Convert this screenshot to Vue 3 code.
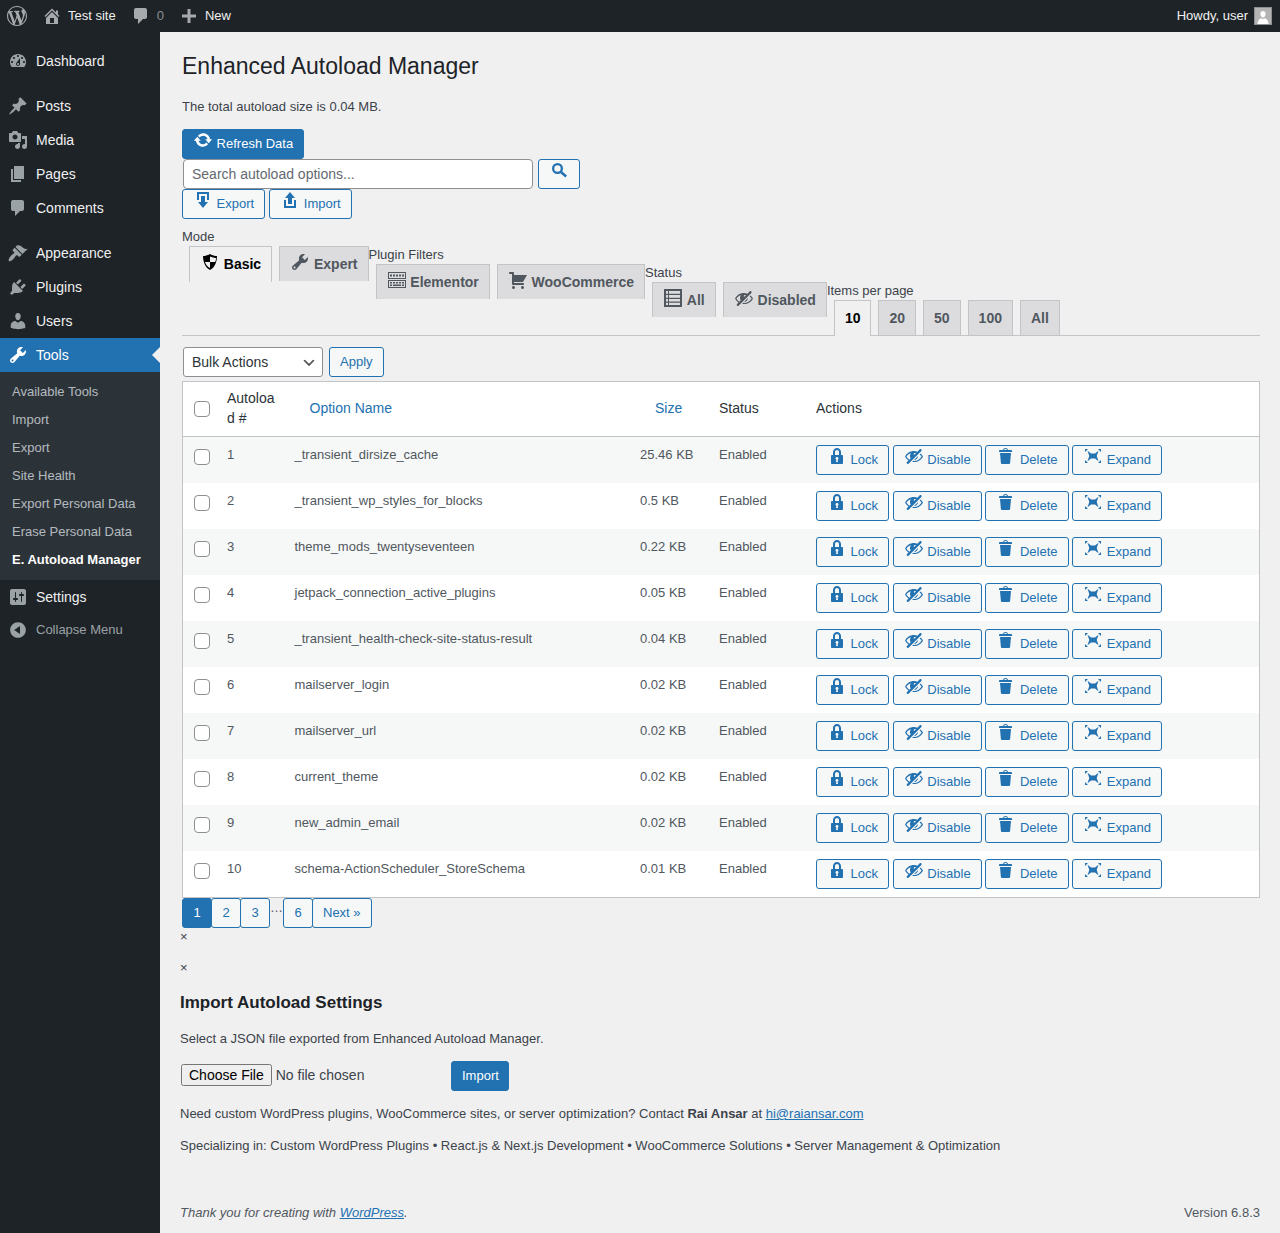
<template>
  <div class="admin">
    <header class="topbar">
      <svg class="dash wp-logo" viewBox="0 0 20 20"><path :d="icons.wordpress" /></svg>
      <span class="top-item"><svg class="dash" viewBox="0 0 20 20"><path :d="icons.home" /></svg>Test site</span>
      <span class="top-item comments"><svg class="dash" viewBox="0 0 20 20"><path :d="icons.comments" /></svg><em>0</em></span>
      <span class="top-item new"><svg class="dash" viewBox="0 0 20 20"><path :d="icons.plus" /></svg>New</span>
      <span class="howdy">Howdy, user
        <span class="avatar"><svg viewBox="0 0 16 16"><path d="M8 3c1.7 0 2.6 1.4 2.6 3S9.700 9.500 8 9.500 5.400 7.600 5.400 6 6.300 3 8 3zM2.500 16c0-3.500 2-5.500 3.500-5.800.6.500 1.300.8 2 .8s1.400-.3 2-.8c1.500.3 3.500 2.300 3.500 5.800z" /></svg></span>
      </span>
    </header>

    <div class="body">
      <nav class="sidebar">
        <template v-for="item in menu" :key="item.label">
          <div class="menu-item" :class="{ active: item.active, spaced: item.spaced }">
            <svg class="dash" viewBox="0 0 20 20"><path :d="icons[item.icon]" /></svg>
            {{ item.label }}
          </div>
          <ul v-if="item.active" class="submenu">
            <li v-for="sub in submenu" :key="sub" :class="{ current: sub === 'E. Autoload Manager' }">{{ sub }}</li>
          </ul>
        </template>
        <div class="collapse-row">
          <svg class="dash" viewBox="0 0 20 20"><path :d="icons.collapse" /></svg>
          Collapse Menu
        </div>
      </nav>

      <main class="content">
        <div class="wrap">
          <h1>Enhanced Autoload Manager</h1>
          <p class="total">The total autoload size is 0.04 MB.</p>

          <div class="toolbar">
            <button class="btn primary"><svg class="dash" viewBox="0 0 20 20"><path :d="icons.update" /></svg>Refresh Data</button>
          </div>
          <div class="toolbar search-row">
            <input class="search" type="text" placeholder="Search autoload options..." />
            <button class="btn icon-only"><svg class="dash" viewBox="0 0 20 20"><path :d="icons.search" /></svg></button>
          </div>
          <div class="toolbar io-row">
            <button class="btn"><svg class="dash" viewBox="0 0 20 20"><path :d="icons.download" /></svg>Export</button>
            <button class="btn"><svg class="dash" viewBox="0 0 20 20"><path :d="icons.upload" /></svg>Import</button>
          </div>

          <div class="tabs">
            <div v-for="(group, i) in tabGroups" :key="group.label" class="tab-group" :style="{ marginTop: i * 18 + 'px' }">
              <label>{{ group.label }}</label>
              <div class="tab-row">
                <a v-for="tab in group.tabs" :key="tab.text" class="tab" :class="{ on: tab.on }">
                  <svg v-if="tab.icon" class="dash" viewBox="0 0 20 20"><path :d="icons[tab.icon]" /></svg>{{ tab.text }}
                </a>
              </div>
            </div>
          </div>

          <div class="bulk">
            <select class="bulk-select"><option>Bulk Actions</option></select>
            <button class="btn">Apply</button>
          </div>

          <table class="options">
            <colgroup>
              <col style="width: 34px" />
              <col style="width: 67.5px" />
              <col style="width: 345.5px" />
              <col style="width: 79px" />
              <col style="width: 97px" />
              <col />
            </colgroup>
            <thead>
              <tr>
                <th class="check"><input type="checkbox" /></th>
                <th>Autoload #</th>
                <th><a class="sort">Option Name</a></th>
                <th><a class="sort">Size</a></th>
                <th>Status</th>
                <th>Actions</th>
              </tr>
            </thead>
            <tbody>
              <tr v-for="(row, i) in rows" :key="row[0]">
                <td class="check"><input type="checkbox" /></td>
                <td>{{ i + 1 }}</td>
                <td>{{ row[0] }}</td>
                <td>{{ row[1] }}</td>
                <td>Enabled</td>
                <td class="actions">
                  <button v-for="act in actions" :key="act.text" class="btn">
                    <svg class="dash" viewBox="0 0 20 20"><path :d="icons[act.icon]" /></svg>{{ act.text }}
                  </button>
                </td>
              </tr>
            </tbody>
          </table>

          <div class="pager">
            <a class="page current">1</a>
            <a class="page">2</a>
            <a class="page">3</a>
            <span class="dots">…</span>
            <a class="page">6</a>
            <a class="page next">Next »</a>
          </div>
        </div>

        <div class="modals">
          <div class="close first">×</div>
          <div class="close">×</div>
          <h2>Import Autoload Settings</h2>
          <p class="select-text">Select a JSON file exported from Enhanced Autoload Manager.</p>
          <div class="file-row">
            <input type="file" class="file" />
            <button class="btn primary plain">Import</button>
          </div>
          <p class="contact">Need custom WordPress plugins, WooCommerce sites, or server optimization? Contact <strong>Rai Ansar</strong> at <a href="#">hi@raiansar.com</a></p>
          <p class="special">Specializing in: Custom WordPress Plugins • React.js &amp; Next.js Development • WooCommerce Solutions • Server Management &amp; Optimization</p>
        </div>

        <footer class="foot">
          <span class="thanks">Thank you for creating with <a href="#">WordPress</a>.</span>
          <span>Version 6.8.3</span>
        </footer>
      </main>
    </div>
  </div>
</template>

<script setup>
const icons = {
  wordpress: 'M20 10c0-5.51-4.49-10-10-10C4.48 0 0 4.49 0 10c0 5.52 4.48 10 10 10 5.51 0 10-4.48 10-10zM7.780 15.370L4.370 6.220c.55-.02 1.170-.08 1.170-.08.5-.06.44-1.130-.06-1.110 0 0-1.450.11-2.370.11-.18 0-.37 0-.58-.01C4.120 2.690 6.870 1.110 10 1.110c2.330 0 4.450.87 6.050 2.340-.68-.11-1.650.39-1.650 1.580 0 .74.45 1.360.9 2.100.35.61.55 1.360.55 2.460 0 1.490-1.400 5-1.400 5l-3.030-8.370c.54-.02.82-.17.82-.17.5-.05.44-1.250-.06-1.220 0 0-1.440.12-2.380.12-.87 0-2.330-.12-2.330-.12-.5-.03-.56 1.200-.06 1.220l.92.08 1.260 3.410zM17.410 10c.24-.64.74-1.870.43-4.250.7 1.290 1.050 2.710 1.050 4.250 0 3.290-1.730 6.240-4.400 7.780.97-2.590 1.940-5.200 2.920-7.780zM6.100 18.090C3.120 16.650 1.110 13.530 1.110 10c0-1.300.23-2.480.72-3.590C3.250 10.300 4.670 14.200 6.100 18.090zm4.030-6.630l2.580 6.980c-.86.29-1.760.45-2.710.45-.79 0-1.570-.11-2.290-.33.81-2.380 1.620-4.740 2.420-7.100z',
  home: 'M16 8.500l1.530 1.530-1.060 1.060L10 4.620l-6.470 6.470-1.060-1.060L10 2.500l4 4v-2h2v4zm-6-2.460l6 5.990V18H4v-5.970zM12 17v-5H8v5h4z',
  comments: 'M5 2h9c1.100 0 2 .9 2 2v7c0 1.100-.9 2-2 2h-2l-5 5v-5H5c-1.100 0-2-.9-2-2V4c0-1.100.9-2 2-2z',
  plus: 'M8.500 3h3v5.500H17v3h-5.500V17h-3v-5.500H3v-3h5.500z',
  dashboard: 'M3.760 16h12.480c1.100-1.370 1.760-3.110 1.760-5 0-4.420-3.580-8-8-8s-8 3.580-8 8c0 1.890.66 3.630 1.760 5zM10 4c.55 0 1 .45 1 1s-.45 1-1 1-1-.45-1-1 .45-1 1-1zM6 6c.55 0 1 .45 1 1s-.45 1-1 1-1-.45-1-1 .45-1 1-1zm8 0c.55 0 1 .45 1 1s-.45 1-1 1-1-.45-1-1 .45-1 1-1zm-5.370 5.550L12 7v6c0 1.100-.9 2-2 2s-2-.9-2-2c0-.57.24-1.080.63-1.450zM4 10c.55 0 1 .45 1 1s-.45 1-1 1-1-.45-1-1 .45-1 1-1zm12 0c.55 0 1 .45 1 1s-.45 1-1 1-1-.45-1-1 .45-1 1-1zm-5 3c0-.55-.45-1-1-1s-1 .45-1 1 .45 1 1 1 1-.45 1-1z',
  post: 'M10.440 3.020l1.820-1.820 6.360 6.350-1.830 1.820c-1.050-.68-2.480-.57-3.410.36l-.75.75c-.92.93-1.040 2.350-.35 3.410l-1.830 1.820-2.410-2.410-2.800 2.790c-.42.42-3.380 2.710-3.800 2.290s1.860-3.390 2.280-3.810l2.790-2.790L4.100 9.360l1.830-1.820c1.050.69 2.480.57 3.400-.36l.75-.75c.93-.92 1.050-2.350.36-3.410z',
  media: 'M13 11V4c0-.55-.45-1-1-1h-1.670L9 1H5L3.670 3H2c-.55 0-1 .45-1 1v7c0 .55.45 1 1 1h10c.55 0 1-.45 1-1zM7 4.500c1.380 0 2.500 1.120 2.500 2.500S8.380 9.500 7 9.500 4.500 8.380 4.500 7 5.620 4.500 7 4.500zM14 6h5v10.500c0 1.380-1.120 2.500-2.500 2.500S14 17.880 14 16.500s1.120-2.500 2.500-2.500c.17 0 .34.02.5.05V9h-3V6zm-4 8.050V13h2v3.500c0 1.380-1.120 2.500-2.500 2.500S7 17.880 7 16.500 8.120 14 9.500 14c.17 0 .34.02.5.05z',
  page: 'M6 15V2h10v13H6zm-1 1h8v2H3V5h2v11z',
  appearance: 'M14.480 11.060L7.410 3.990l1.500-1.500c.5-.56 2.300-.47 3.510.32 1.210.8 1.430 1.280 2.910 2.100 1.180.64 2.450 1.260 4.450.85zM13.770 11.770L6.700 4.700 4.930 6.470c-.39.39-.39 1.020 0 1.410l1.060 1.060c.39.39.39 1.030 0 1.420-.6.6-1.430 1.110-2.210 1.690-.35.26-.7.53-1.010.84-1.300 1.300-2.700 4.200-1.900 5s3.400-.5 4.710-2.190c.31-.31.58-.66.84-1.010.58-.78 1.090-1.610 1.690-2.210.39-.39 1.030-.39 1.420 0l1.060 1.060c.39.39 1.020.39 1.410 0z',
  plugins: 'M13.110 4.360L9.870 7.600 8 5.730l3.240-3.240c.35-.34 1.050-.2 1.560.32.52.51.66 1.210.31 1.550zm-8 1.770l.91-1.120 9.010 9.010-1.190.84c-.71.71-2.630 1.160-3.820 1.160H6.140L4.900 17.260c-.59.59-1.540.59-2.120 0-.59-.58-.59-1.530 0-2.120l1.240-1.240v-3.880c0-1.130.4-3.190 1.090-3.890zm7.260 3.970l3.240-3.240c.34-.35 1.040-.21 1.550.31.52.51.66 1.210.31 1.550l-3.240 3.250z',
  users: 'M10 9.250c-2.270 0-2.730-3.440-2.730-3.440C7 4.020 7.820 2 9.970 2c2.160 0 2.980 2.020 2.710 3.810 0 0-.41 3.440-2.680 3.440zm0 2.570L12.720 10c2.390 0 4.520 2.330 4.520 4.530v2.490s-3.650 1.130-7.240 1.130c-3.650 0-7.240-1.130-7.240-1.130v-2.490c0-2.250 1.940-4.480 4.470-4.480z',
  tools: 'M16.680 9.770c-1.340 1.340-3.300 1.670-4.950.99l-5.410 6.520c-.99.99-2.590.99-3.580 0s-.99-2.590 0-3.570l6.520-5.420c-.68-1.650-.35-3.610.99-4.950 1.280-1.280 3.120-1.620 4.720-1.060l-2.890 2.890 2.820 2.820 2.860-2.870c.53 1.580.18 3.390-1.080 4.650zM3.810 16.210c.4.39 1.040.39 1.430 0 .4-.4.4-1.040 0-1.430-.39-.4-1.030-.4-1.430 0-.39.39-.39 1.030 0 1.430z',
  settings: 'M18 16V4c0-1.100-.9-2-2-2H4c-1.100 0-2 .9-2 2v12c0 1.100.9 2 2 2h12c1.100 0 2-.9 2-2zM8 11h1c.55 0 1 .45 1 1s-.45 1-1 1H8v1.500c0 .28-.22.5-.5.5s-.5-.22-.5-.5V13H6c-.55 0-1-.45-1-1s.45-1 1-1h1V5.500c0-.28.22-.5.5-.5s.5.22.5.5V11zm5-2h-1c-.55 0-1-.45-1-1s.45-1 1-1h1V5.500c0-.28.22-.5.5-.5s.5.22.5.5V7h1c.55 0 1 .45 1 1s-.45 1-1 1h-1v5.500c0 .28-.22.5-.5.5s-.5-.22-.5-.5V9z',
  collapse: 'M10 2.160c4.330 0 7.840 3.510 7.840 7.840s-3.510 7.840-7.840 7.840S2.160 14.330 2.160 10 5.710 2.160 10 2.160zm2 11.720V6.120L6.180 9.970z',
  update: 'M10.200 3.280c3.530 0 6.430 2.610 6.920 6h2.080l-3.500 4-3.500-4h2.320c-.45-1.970-2.210-3.440-4.320-3.440-1.450 0-2.730.71-3.540 1.780L4.950 5.660C6.230 4.200 8.110 3.280 10.200 3.280zm-.4 13.440c-3.520 0-6.430-2.610-6.920-6H.8l3.500-4c1.170 1.330 2.330 2.670 3.500 4H5.480c.45 1.970 2.210 3.440 4.320 3.440 1.450 0 2.730-.71 3.540-1.780l1.710 1.950c-1.280 1.460-3.150 2.390-5.250 2.390z',
  search: 'M8.500 3a5.500 5.500 0 1 0 0 11a5.500 5.500 0 1 0 0-11zM8.500 5.300a3.200 3.200 0 1 1 0 6.400a3.200 3.200 0 1 1 0-6.400zM13.300 11.400L18 15.600 16.400 17.400 11.400 13.300z',
  download: 'M14.010 4v6h2V2H4v8h2.010V4h8zm-2 2v6h3l-5 6-5-6h3V6h4z',
  upload: 'M8 14V8H5l5-6 5 6h-3v6H8zm-2 2v-6H4v8h12.010v-8H14v6H6z',
  shield: 'M10 2s3 2 7 2c0 11-7 14-7 14S3 15 3 4c4 0 7-2 7-2zm0 8H5s1 4 5 6v-6zm0 0h5s1-1 1-4c-2 0-6-1.500-6-1.500V10z',
  keyboard: 'M1 2h18v7H1zM2 3v5h16V3zM3 4.500h2v2H3zM6 4.500h2v2H6zM9 4.500h2v2H9zM12 4.500h2v2h-2zM15 4.500h2v2h-2zM1 10h18v8H1zM2 11v6h16v-6zM3 12h2v1.500H3zM6 12h2v1.500H6zM9 12h2v1.500H9zM12 12h2v1.500h-2zM15 12h2v1.500h-2zM3 14.500h2V16H3zM6 14.500h8V16H6zM15 14.500h2V16h-2z',
  cart: 'M6 13h9c.55 0 1 .45 1 1s-.45 1-1 1H5c-.55 0-1-.45-1-1V4H2c-.55 0-1-.45-1-1s.45-1 1-1h3c.55 0 1 .45 1 1v2h13l-4 7H6v1zm-.5 3c.83 0 1.500.67 1.500 1.500S6.330 19 5.500 19 4 18.330 4 17.500 4.670 16 5.500 16zm9 0c.83 0 1.500.67 1.500 1.500s-.67 1.500-1.500 1.500-1.500-.67-1.500-1.500.67-1.500 1.500-1.500z',
  table: 'M1 1h18v18H1zM3 3v2.800h2V3zM6 3v2.800h11V3zM3 7v2.800h2V7zM6 7v2.800h11V7zM3 11v2.500h2V11zM6 11v2.500h11V11zM3 14.700V17h2v-2.300zM6 14.700V17h11v-2.300z',
  hidden: 'M17.200 3.300l.16.17c.39.39.39 1.020 0 1.410L4.550 17.700c-.39.39-1.030.39-1.410 0l-.17-.17c-.39-.39-.39-1.020 0-1.410l1.590-1.600c-1.570-1-2.760-2.300-3.560-3.930.81-1.650 2.030-2.980 3.640-3.990S8.040 5.090 10 5.090c1.200 0 2.330.21 3.400.6l2.380-2.390c.39-.39 1.030-.39 1.420 0zm-7.090 4.010c-.23.25-.34.54-.34.88 0 .31.12.58.31.81l1.800-1.790c-.13-.12-.28-.21-.45-.26-.11-.01-.28-.03-.49-.04-.33.03-.6.16-.83.4zM2.400 10.590c.69 1.230 1.710 2.250 3.050 3.050l1.280-1.280c-.51-.69-.77-1.470-.77-2.360 0-1.060.36-1.980 1.090-2.760-1.040.27-1.960.7-2.760 1.260-.8.58-1.430 1.270-1.890 2.090zm13.220-2.130l.96-.96c1.020.86 1.830 1.890 2.420 3.090-.81 1.650-2.030 2.980-3.640 3.990s-3.400 1.510-5.360 1.510c-.63 0-1.240-.07-1.830-.18l1.070-1.070c.25.02.5.05.76.05 1.630 0 3.130-.4 4.500-1.210s2.400-1.840 3.100-3.090c-.46-.82-1.090-1.510-1.890-2.090-.03-.01-.06-.03-.09-.04zm-5.580 5.580l4-4c-.01 1.100-.41 2.040-1.180 2.810-.78.78-1.720 1.180-2.820 1.190z',
  lock: 'M14 9h1c.55 0 1 .45 1 1v7c0 .55-.45 1-1 1H5c-.55 0-1-.45-1-1v-7c0-.55.45-1 1-1h1V6c0-2.210 1.790-4 4-4s4 1.790 4 4v3zm-2 0V6c0-1.100-.9-2-2-2s-2 .9-2 2v3h4zm-1 7l-.36-2.150c.51-.24.86-.75.86-1.350 0-.83-.67-1.500-1.500-1.500s-1.500.67-1.500 1.500c0 .6.35 1.110.86 1.350L9 16h2z',
  trash: 'M12 4h3c.6 0 1 .4 1 1v1H3V5c0-.6.5-1 1-1h3c.2-1.100 1.300-2 2.500-2s2.300.9 2.500 2zM8 4h3c-.2-.6-.9-1-1.500-1S8.200 3.400 8 4zM4 7h11l-.9 10.100c0 .5-.5.9-1 .9H5.900c-.5 0-.9-.4-1-.9L4 7z',
  expand: 'M4.500 4.800L8 7.500h4l3.500-2.700-1.800 5.200 1.800 5.200L12 12.500H8l-3.500 2.700L6.300 10zM2 3h3L2 6zM18 3v3l-3-3zM2 17v-3l3 3zM18 17h-3l3-3z'
}

const menu = [
  { label: 'Dashboard', icon: 'dashboard' },
  { label: 'Posts', icon: 'post', spaced: true },
  { label: 'Media', icon: 'media' },
  { label: 'Pages', icon: 'page' },
  { label: 'Comments', icon: 'comments' },
  { label: 'Appearance', icon: 'appearance', spaced: true },
  { label: 'Plugins', icon: 'plugins' },
  { label: 'Users', icon: 'users' },
  { label: 'Tools', icon: 'tools', active: true },
  { label: 'Settings', icon: 'settings' }
]

const submenu = ['Available Tools', 'Import', 'Export', 'Site Health', 'Export Personal Data', 'Erase Personal Data', 'E. Autoload Manager']

const tabGroups = [
  { label: 'Mode', tabs: [{ text: 'Basic', icon: 'shield', on: true }, { text: 'Expert', icon: 'tools' }] },
  { label: 'Plugin Filters', tabs: [{ text: 'Elementor', icon: 'keyboard' }, { text: 'WooCommerce', icon: 'cart' }] },
  { label: 'Status', tabs: [{ text: 'All', icon: 'table' }, { text: 'Disabled', icon: 'hidden' }] },
  { label: 'Items per page', tabs: [{ text: '10', on: true }, { text: '20' }, { text: '50' }, { text: '100' }, { text: 'All' }] }
]

const rows = [
  ['_transient_dirsize_cache', '25.46 KB'],
  ['_transient_wp_styles_for_blocks', '0.5 KB'],
  ['theme_mods_twentyseventeen', '0.22 KB'],
  ['jetpack_connection_active_plugins', '0.05 KB'],
  ['_transient_health-check-site-status-result', '0.04 KB'],
  ['mailserver_login', '0.02 KB'],
  ['mailserver_url', '0.02 KB'],
  ['current_theme', '0.02 KB'],
  ['new_admin_email', '0.02 KB'],
  ['schema-ActionScheduler_StoreSchema', '0.01 KB']
]

const actions = [
  { text: 'Lock', icon: 'lock' },
  { text: 'Disable', icon: 'hidden' },
  { text: 'Delete', icon: 'trash' },
  { text: 'Expand', icon: 'expand' }
]
</script>

<style>
body {
  background: #f0f0f1;
}
</style>

<style scoped>
.admin {
  font-family: "Liberation Sans", Arial, sans-serif;
  font-size: 13px;
  line-height: 1.4;
  color: #3c434a;
  min-height: 1233px;
  display: flex;
  flex-direction: column;
}

.dash {
  width: 20px;
  height: 20px;
  flex: none;
  fill: currentColor;
  fill-rule: evenodd;
}

.topbar {
  height: 32px;
  background: #1d2327;
  color: #f0f0f1;
  display: flex;
  align-items: center;
  padding: 0 8px 0 7px;
}

.topbar .dash {
  color: #a7aaad;
}

.wp-logo {
  margin-right: 15px;
}

.top-item {
  display: flex;
  align-items: center;
  gap: 6px;
  margin-right: 15px;
}

.top-item.comments em {
  font-style: normal;
  color: #8c8f94;
}

.howdy {
  margin-left: auto;
  display: flex;
  align-items: center;
  gap: 6px;
}

.avatar {
  width: 16px;
  height: 16px;
  border: 1px solid #8c8f94;
  background: #b4b4b4;
  display: block;
}

.avatar svg {
  display: block;
  width: 16px;
  height: 16px;
  fill: #fff;
}

.body {
  flex: 1;
  display: flex;
}

.sidebar {
  width: 160px;
  flex: none;
  background: #1d2327;
  padding-top: 12px;
  color: #f0f0f1;
}

.menu-item {
  height: 34px;
  display: flex;
  align-items: center;
  font-size: 14px;
  line-height: 18px;
  position: relative;
  padding-left: 8px;
  gap: 8px;
}

.menu-item .dash {
  color: rgba(240, 246, 252, 0.6);
}

.menu-item.spaced {
  margin-top: 11px;
}

.menu-item.active {
  background: #2271b1;
  color: #fff;
}

.menu-item.active .dash {
  color: #fff;
}

.menu-item.active::after {
  content: "";
  position: absolute;
  right: 0;
  top: 9px;
  border: 8px solid transparent;
  border-left-width: 0;
  border-right-color: #f0f0f1;
}

.submenu {
  list-style: none;
  margin: 0;
  background: #2c3338;
  padding: 6px 0;
}

.submenu li {
  height: 28px;
  line-height: 28px;
  padding-left: 12px;
  color: rgba(240, 246, 252, 0.7);
}

.submenu li.current {
  color: #fff;
  font-weight: 700;
}

.collapse-row {
  height: 34px;
  margin-top: -1px;
  display: flex;
  align-items: center;
  gap: 8px;
  padding-left: 8px;
  color: rgba(240, 246, 252, 0.6);
}

.content {
  flex: 1;
  min-width: 0;
  padding-left: 20px;
  display: flex;
  flex-direction: column;
}

.wrap {
  margin: 10px 20px 0 2px;
}

h1 {
  font-size: 23px;
  font-weight: 400;
  line-height: 30px;
  margin: 0;
  padding: 9px 0 4px;
  color: #1d2327;
}

.total {
  margin: 12px 0 13px;
  line-height: 19px;
}

.toolbar {
  display: flex;
}

.search-row {
  padding-left: 1px;
  gap: 5px;
}

.io-row {
  gap: 4px;
}

.btn {
  font: inherit;
  height: 30px;
  line-height: 28px;
  padding: 0 10px;
  border: 1px solid #2271b1;
  border-radius: 3px;
  background: #f6f7f7;
  color: #2271b1;
  display: inline-flex;
  align-items: flex-start;
  white-space: nowrap;
}

.btn .dash {
  margin-right: 3.600px;
}

.btn.primary {
  background: #2271b1;
  color: #fff;
}

.btn.icon-only .dash {
  margin-right: 0;
}

.search {
  width: 350px;
  height: 30px;
  box-sizing: border-box;
  font: inherit;
  font-size: 14px;
  padding: 0 8px;
  border: 1px solid #8c8f94;
  border-radius: 4px;
  color: #2c3338;
  background: #fff;
}

.search::placeholder {
  color: #646970;
  opacity: 1;
}

.tabs {
  margin-top: 9px;
  display: flex;
  align-items: flex-start;
  border-bottom: 1px solid #c3c4c7;
  height: 107px;
}

.tab-group label {
  display: block;
  height: 18px;
  line-height: 17px;
}

.tab-row {
  display: flex;
}

.tab {
  display: flex;
  align-items: flex-start;
  margin-left: 7px;
  padding: 5px 10px;
  height: 24px;
  line-height: 24px;
  font-size: 14px;
  font-weight: 700;
  color: #50575e;
  background: #dcdcde;
  border: 1px solid #c3c4c7;
  border-bottom: none;
}

.tab .dash {
  margin-right: 3.800px;
}

.tab.on {
  background: #f0f0f1;
  color: #000;
  padding-bottom: 6px;
}

.bulk {
  margin-top: 11px;
  padding-left: 1px;
  display: flex;
  gap: 6px;
}

.bulk-select {
  width: 140px;
  height: 30px;
  font: inherit;
  font-size: 14px;
  color: #2c3338;
  padding: 2px 24px 0 8px;
  border: 1px solid #8c8f94;
  border-radius: 3px;
  appearance: none;
  background: #fff url("data:image/svg+xml,%3Csvg xmlns='http://www.w3.org/2000/svg' width='20' height='20'%3E%3Cpath d='M5 6l5 5 5-5 2 1-7 7-7-7 2-1z' fill='%23555'/%3E%3C/svg%3E") no-repeat right 5px top 55%;
  background-size: 16px 16px;
}

.options {
  margin-top: 4px;
  width: 100%;
  table-layout: fixed;
  border-collapse: separate;
  border-spacing: 0;
  background: #fff;
  border: 1px solid #c3c4c7;
  font-size: 13px;
}

.options th {
  font-size: 14px;
  font-weight: 400;
  text-align: left;
  color: #2c3338;
  line-height: 19.600px;
  height: 55px;
  padding: 0 10px;
  border-bottom: 1px solid #c3c4c7;
  box-sizing: border-box;
  overflow-wrap: anywhere;
}

.options th.check,
.options td.check {
  padding: 0 0 0 11px;
}

.options .sort {
  padding-left: 15px;
  color: #2271b1;
}

.options td {
  height: 46px;
  padding: 8px 10px;
  box-sizing: border-box;
  vertical-align: top;
  color: #50575e;
  line-height: 19.500px;
  overflow: hidden;
  white-space: nowrap;
}

.options tbody tr:nth-child(odd) {
  background: #f6f7f7;
}

.options td.check {
  padding-top: 12px;
}

input[type="checkbox"] {
  appearance: none;
  display: block;
  box-sizing: border-box;
  width: 16px;
  height: 16px;
  margin: 0;
  background: #fff;
  border: 1px solid #8c8f94;
  border-radius: 4px;
}

.actions {
  display: flex;
  gap: 3.700px;
}

.pager {
  display: flex;
  height: 30px;
}

.page {
  box-sizing: border-box;
  height: 30px;
  min-width: 30px;
  padding: 0 10px;
  line-height: 28px;
  text-align: center;
  border: 1px solid #2271b1;
  border-radius: 3px;
  background: #f6f7f7;
  color: #2271b1;
  margin-right: -1px;
}

.page.current {
  background: #2271b1;
  color: #fff;
}

.dots {
  width: 13px;
  line-height: 20px;
  margin-left: 1px;
  color: #50575e;
}

.page.next {
  margin-right: 0;
}

.modals {
  margin-right: 20px;
}

.close {
  height: 19px;
  line-height: 19px;
  margin-bottom: 12px;
}

.close.first {
  margin-top: -1px;
}

h2 {
  font-size: 17px;
  line-height: 22px;
  font-weight: 700;
  color: #1d2327;
  margin: 15px 0 0;
}

.select-text {
  margin: 15px 0 0;
  line-height: 19px;
}

.file-row {
  margin-top: 13px;
  display: flex;
  align-items: center;
}

.file {
  font: inherit;
  font-size: 14px;
  margin: 0 1px 2px;
  width: 266px;
}

.btn.plain {
  margin-left: 3px;
  padding-right: 9.500px;
}

.contact {
  margin: 13px 0 0;
  line-height: 20px;
}

.contact a {
  color: #2271b1;
}

.special {
  margin: 12px 0 0;
  line-height: 20px;
}

.foot {
  margin: auto 20px 0 0;
  padding-bottom: 10px;
  display: flex;
  justify-content: space-between;
  color: #50575e;
  line-height: 20px;
}

.thanks {
  font-style: italic;
}

.thanks a {
  color: #2271b1;
}
</style>
